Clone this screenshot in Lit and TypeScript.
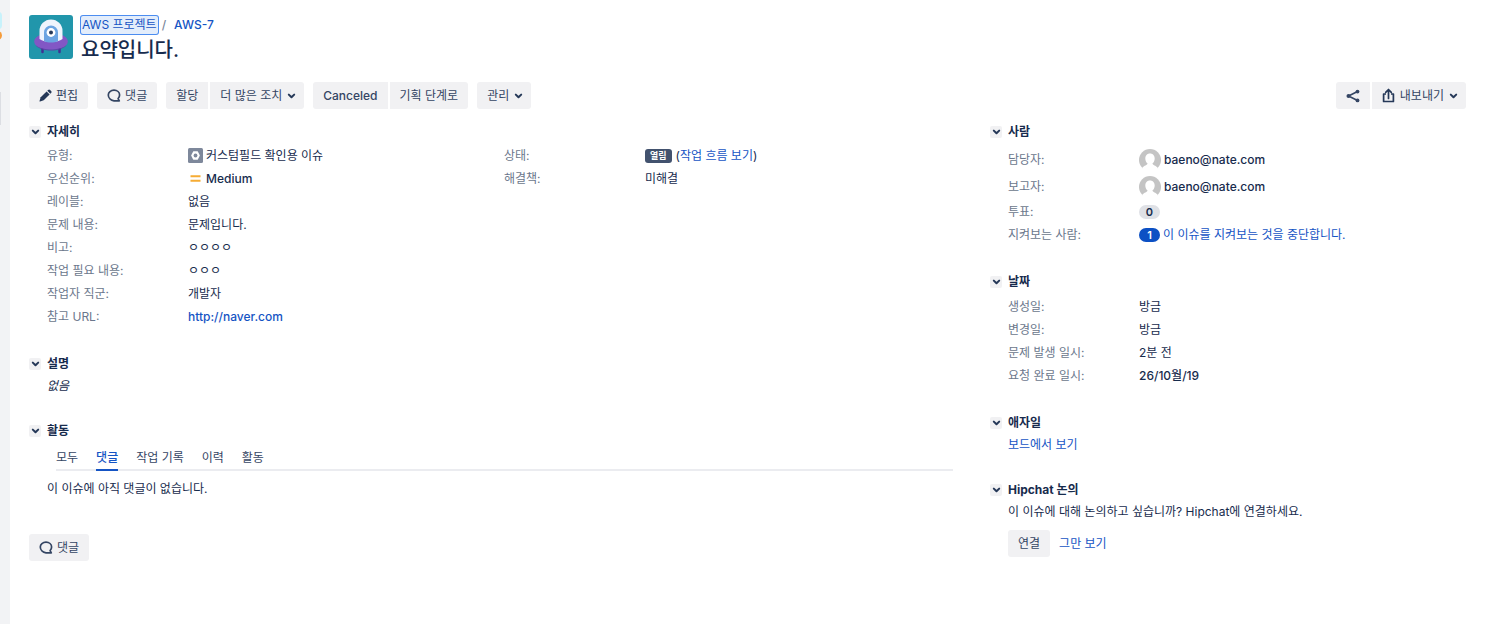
import { LitElement, html, css } from "lit";
import { customElement, property } from "lit/decorators.js";

const chevronIcon = html`<svg width="9" height="8" viewBox="0 0 9 8" aria-hidden="true">
  <path d="M1.8 2.6 4.5 5.3 7.2 2.6" fill="none" stroke="#253858" stroke-width="2" stroke-linecap="round" stroke-linejoin="round"/>
</svg>`;

const editIcon = html`<svg width="13" height="13" viewBox="0 0 13 13" aria-hidden="true">
  <path d="M9.1.9a1.4 1.4 0 0 1 2 0l1 1a1.4 1.4 0 0 1 0 2l-.8.8-3-3z" fill="#253858"/>
  <path d="M7.6 2.4 10.6 5.4 4.7 11.3 1.1 12.5Q.4 12.6.5 11.9L1.7 8.3z" fill="#253858"/>
</svg>`;

const commentIcon = html`<svg width="14" height="13" viewBox="0 0 14 13" aria-hidden="true">
  <path d="M7 1.2c3.2 0 5.6 2.2 5.6 4.9 0 1.400-.6 2.600-1.500 3.500l1.200 2.200H7C3.800 11.400 1.300 9 1.300 6.100 1.300 3.400 3.800 1.200 7 1.200z" fill="none" stroke="#344563" stroke-width="1.700" stroke-linejoin="round"/>
</svg>`;

const shareIcon = html`<svg width="14" height="14" viewBox="0 0 14 14" aria-hidden="true">
  <path d="M11.500 2.500 2.500 7 11.500 11.500" fill="none" stroke="#344563" stroke-width="1.600"/>
  <circle cx="11.500" cy="2.600" r="1.900" fill="#344563"/><circle cx="2.500" cy="7" r="2" fill="#344563"/><circle cx="11.500" cy="11.400" r="1.900" fill="#344563"/>
</svg>`;

const exportIcon = html`<svg width="13" height="15" viewBox="0 0 13 15" aria-hidden="true">
  <path d="M4 6H1.600v7.500h9.800V6H9" fill="none" stroke="#253858" stroke-width="1.700" stroke-linejoin="round"/>
  <path d="M6.500 10.500V2M3.700 4.300 6.500 1.500 9.300 4.300" fill="none" stroke="#253858" stroke-width="1.700" stroke-linecap="round" stroke-linejoin="round"/>
</svg>`;

const projectIcon = html`<svg width="44" height="44" viewBox="0 0 44 44" aria-hidden="true">
  <rect width="44" height="44" rx="3" fill="#2196ab"/>
  <path d="M13.500 32v5M30.500 32v5" stroke="#403294" stroke-width="2.500" stroke-linecap="round"/>
  <ellipse cx="22" cy="26.500" rx="16.800" ry="8.500" fill="#8257c5"/>
  <path d="M6.500 30c6 6 25 6 31 0-3 4-9 5.500-15.500 5.500S9.500 34 6.500 30z" fill="#6240a8"/>
  <path d="M10.500 24v-8a11.500 11.500 0 0 1 23 0v8c-5 4-18 4-23 0z" fill="#eef4fd"/>
  <path d="M15 26v-8.500a7 7 0 0 1 14 0V26c-4 2-10 2-14 0z" fill="#6ba4e2"/>
  <circle cx="22" cy="17.500" r="4.400" fill="#fff"/><circle cx="22" cy="17.500" r="2" fill="#253858"/>
</svg>`;

const typeIcon = html`<svg width="15" height="15" viewBox="0 0 15 15" aria-hidden="true">
  <rect width="15" height="15" rx="1.500" fill="#7e889b"/>
  <path d="M5.300 3.300h4.400l2.200 4.200-2.200 4.200H5.300L3.100 7.500z" fill="#fff"/>
  <circle cx="7.500" cy="7.500" r="1.900" fill="#7e889b"/>
</svg>`;

const priorityIcon = html`<svg width="15" height="15" viewBox="0 0 15 15" aria-hidden="true">
  <path d="M2.500 5.200h10M2.500 9.800h10" stroke="#f6ac34" stroke-width="2"/>
</svg>`;

const avatarIcon = html`<svg width="22" height="22" viewBox="0 0 22 22" aria-hidden="true">
  <circle cx="11" cy="11" r="11" fill="#c4c4c4"/>
  <path d="M11 4.500c3 0 4.700 2.200 4.700 5 0 2.200-1 4.100-2.300 5 .2 1.600 3.600 2 5.300 4.300L17 22H5l-1.700-3.200c1.700-2.300 5.100-2.700 5.300-4.300-1.300-.9-2.300-2.800-2.300-5 0-2.800 1.700-5 4.700-5z" fill="#fff"/>
</svg>`;

@customElement("issue-section")
export class IssueSection extends LitElement {
  @property() heading = "";

  static styles = css`
    :host { display: block; }
    .head { display: flex; align-items: center; gap: 6px; height: 18px; }
    .toggle {
      display: grid; place-items: center; width: 12px; height: 12px; padding: 0;
      border: 0; border-radius: 2px; background: #f1f1f3;
    }
    .title { margin: 0; font-size: 12px; line-height: 18px; font-weight: 700; color: #172b4d; }
    .body { padding-left: 18px; }
  `;

  render() {
    return html`
      <div class="head">
        <button class="toggle" aria-label=${this.heading}>${chevronIcon}</button>
        <h4 class="title">${this.heading}</h4>
      </div>
      <div class="body"><slot></slot></div>
    `;
  }
}

type Row = [string, unknown];

const details: Row[] = [
  ["유형:", html`${typeIcon}<span>커스텀필드 확인용 이슈</span>`],
  ["우선순위:", html`${priorityIcon}<span class="latin">Medium</span>`],
  ["레이블:", "없음"],
  ["문제 내용:", "문제입니다."],
  ["비고:", "ㅇㅇㅇㅇ"],
  ["작업 필요 내용:", "ㅇㅇㅇ"],
  ["작업자 직군:", "개발자"],
  ["참고 URL:", html`<a class="latin" href="#">http://naver.com</a>`],
];

const status: Row[] = [
  ["상태:", html`<span class="lozenge">열림</span><span>(<a href="#">작업 흐름 보기</a>)</span>`],
  ["해결책:", "미해결"],
];

const user = html`${avatarIcon}<span class="latin">baeno@nate.com</span>`;
const people: Row[] = [
  ["담당자:", user],
  ["보고자:", user],
];
const counts: Row[] = [
  ["투표:", html`<span class="badge">0</span>`],
  ["지켜보는 사람:", html`<span class="badge active">1</span><a href="#">이 이슈를 지켜보는 것을 중단합니다.</a>`],
];

const dates: Row[] = [
  ["생성일:", "방금"],
  ["변경일:", "방금"],
  ["문제 발생 일시:", "2분 전"],
  ["요청 완료 일시:", html`<span class="latin">26/10월/19</span>`],
];

const tabs = ["모두", "댓글", "작업 기록", "이력", "활동"];

@customElement("app-root")
export class AppRoot extends LitElement {
  static styles = css`
    :host {
      display: grid; grid-template-columns: 10px minmax(0, 1fr); min-height: 100vh;
      background: #fff; color: #172b4d;
      font: 12px/18px Inter, "Noto Sans CJK KR", sans-serif;
    }
    a { color: #1554c4; text-decoration: none; }
    svg { display: block; flex: none; }
    .latin { font-weight: 500; }
    .rail { background: #f2f3f5; overflow: hidden; }
    .page { padding: 15px 36px 24px 19px; }
    .header { display: flex; gap: 8px; }
    .crumbs { display: flex; align-items: center; gap: 4px; height: 19px; color: #7a869a; font-weight: 500; }
    .crumbs .focused { border-radius: 2px; background: #e3edfb; box-shadow: 0 0 0 1px #4c8df0; font-weight: 400; }
    .crumbs .focused { padding: 0 1px; }
    .key { margin-left: 4px; }
    .summary { margin: 0; font-size: 20px; line-height: 32px; font-weight: 500; }
    .toolbar { display: flex; justify-content: space-between; margin-top: 16px; }
    .tools { display: flex; gap: 9px; }
    .group { display: flex; gap: 2px; }
    .btn {
      display: flex; align-items: center; gap: 4px; height: 27px; padding: 0 10px;
      border: 0; border-radius: 3px; background: #f1f1f3; color: #344563; font: inherit; white-space: nowrap;
    }
    .menu { gap: 5px; padding-right: 8px; }
    .group .btn:not(:last-child) { border-radius: 3px 0 0 3px; }
    .group .btn:not(:first-child) { border-radius: 0 3px 3px 0; }
    .columns { display: grid; grid-template-columns: minmax(0, 66fr) minmax(0, 34fr); gap: 37px; margin-top: 14px; }
    .col { display: flex; flex-direction: column; gap: 27px; }
    .pair { display: grid; grid-template-columns: 1fr 1fr; gap: 8px; padding-top: 3px; }
    .list { margin: 0; }
    .row { display: grid; grid-template-columns: 141px minmax(0, 1fr); align-items: center; height: 23px; }
    .side .row { grid-template-columns: 131px minmax(0, 1fr); }
    .people .row { height: 27px; }
    .people { padding-top: 5px; }
    .dates { padding-top: 4px; }
    .row dt { color: #6b778c; }
    .row dd { display: flex; align-items: center; gap: 3px; margin: 0; }
    .lozenge {
      padding: 0 5px; margin-right: 1px; border-radius: 3px; background: #42526e; color: #fff;
      font-size: 9px; line-height: 14px; font-weight: 700;
    }
    .badge {
      min-width: 21px; border-radius: 7px; background: #dfe1e6; text-align: center;
      font-size: 11px; line-height: 14px; font-weight: 600;
    }
    .active { background: #0c50c4; color: #fff; }
    .text { margin: 0; padding-top: 4px; }
    .tabs { display: flex; gap: 18px; margin-left: 9px; padding-top: 6px; border-bottom: 2px solid #ebecf0; }
    .tab {
      padding: 3px 0 2px; margin-bottom: -2px; border: 0; border-bottom: 2px solid transparent;
      background: none; color: #344563; font: inherit;
    }
    .tab[aria-selected="true"] { color: #1554c4; border-color: #1554c4; font-weight: 500; }
    .empty { margin: 0; padding-top: 9px; }
    .foot { display: flex; margin-top: 9px; }
    .actions { display: flex; align-items: center; gap: 9px; padding-top: 9px; }
  `;

  private rows(items: Row[], cls = "") {
    return html`<dl class="list ${cls}">
      ${items.map(([k, v]) => html`<div class="row"><dt>${k}</dt><dd>${v}</dd></div>`)}
    </dl>`;
  }

  render() {
    return html`
      <div class="rail">
        <svg width="10" height="130" viewBox="0 0 10 130" aria-hidden="true">
          <path d="M0 12a4 4 0 0 1 2 3v11a4 4 0 0 1-2 3z" fill="#c8f2fb"/>
          <circle cx="-2.500" cy="35.500" r="4.500" fill="#f59b3a"/>
          <rect y="92" width="1" height="33" fill="#dcdee3"/>
        </svg>
      </div>
      <main class="page">
        <header class="header">
          ${projectIcon}
          <div>
            <nav class="crumbs"><a class="focused" href="#">AWS 프로젝트</a><span>/</span><a class="key" href="#">AWS-7</a></nav>
            <h1 class="summary">요약입니다.</h1>
          </div>
        </header>
        <div class="toolbar">
          <div class="tools">
            <button class="btn">${editIcon}<span>편집</span></button>
            <button class="btn">${commentIcon}<span>댓글</span></button>
            <div class="group">
              <button class="btn">할당</button>
              <button class="btn menu"><span>더 많은 조치</span>${chevronIcon}</button>
            </div>
            <div class="group">
              <button class="btn"><span class="latin">Canceled</span></button>
              <button class="btn">기획 단계로</button>
            </div>
            <button class="btn menu"><span>관리</span>${chevronIcon}</button>
          </div>
          <div class="group">
            <button class="btn" aria-label="공유">${shareIcon}</button>
            <button class="btn menu">${exportIcon}<span>내보내기</span>${chevronIcon}</button>
          </div>
        </div>
        <div class="columns">
          <div class="col">
            <issue-section heading="자세히">
              <div class="pair">${this.rows(details)}${this.rows(status)}</div>
            </issue-section>
            <issue-section heading="설명"><p class="text"><em>없음</em></p></issue-section>
            <issue-section heading="활동">
              <div class="tabs" role="tablist">
                ${tabs.map((t) => html`<button class="tab" role="tab" aria-selected=${t === "댓글"}>${t}</button>`)}
              </div>
              <p class="empty">이 이슈에 아직 댓글이 없습니다.</p>
            </issue-section>
            <div class="foot"><button class="btn">${commentIcon}<span>댓글</span></button></div>
          </div>
          <div class="col side">
            <issue-section heading="사람">${this.rows(people, "people")}${this.rows(counts)}</issue-section>
            <issue-section heading="날짜">${this.rows(dates, "dates")}</issue-section>
            <issue-section heading="애자일"><p class="text"><a href="#">보드에서 보기</a></p></issue-section>
            <issue-section heading="Hipchat 논의">
              <p class="text">이 이슈에 대해 논의하고 싶습니까? Hipchat에 연결하세요.</p>
              <div class="actions"><button class="btn">연결</button><a href="#">그만 보기</a></div>
            </issue-section>
          </div>
        </div>
      </main>
    `;
  }
}
